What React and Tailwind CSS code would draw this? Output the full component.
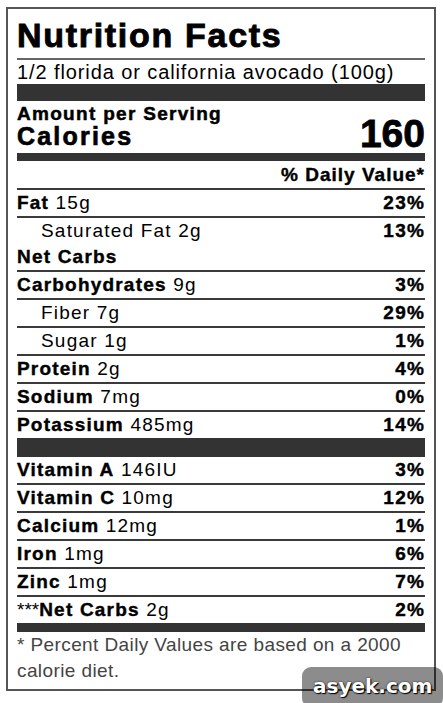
import React from 'react';
import clsx from 'clsx';

const Row = ({ label, amount, dv, indent, border = true, pre }) => (
  <div
    className={clsx(
      'flex justify-between leading-[26px] text-[19px] tracking-[1.2px]',
      border ? 'h-[28px] border-t-2 border-[#3a3a3a]' : 'h-[26px]'
    )}
  >
    <div className={clsx('whitespace-nowrap', indent && 'pl-[24px]')}>
      {pre && <span className="font-normal tracking-normal">{pre}</span>}
      <span className={indent ? 'font-normal' : 'font-bold [-webkit-text-stroke:0.4px_black]'}>{label}</span>
      {amount && <span className="font-normal"> {amount}</span>}
    </div>
    {dv && <div className="font-bold [-webkit-text-stroke:0.4px_black]">{dv}</div>}
  </div>
);

const App = () => {
  return (
    <div className="relative w-[443px] h-[703px] overflow-hidden bg-white text-black font-['Liberation_Sans',Arial,sans-serif]">
      <div className="ml-[6px] mt-[7px] w-[430px] h-[684px] border-2 border-[#555] px-[9px]">
        <div className="h-[51px] pt-[6px] border-b-2 border-[#666]">
          <h1 className="text-[34px] leading-[40px] font-bold tracking-[1.7px] whitespace-nowrap [-webkit-text-stroke:0.9px_black]">
            Nutrition Facts
          </h1>
        </div>
        <div className="h-[24px] leading-[24px] text-[20px] tracking-[0.9px] whitespace-nowrap">
          1/2 florida or california avocado (100g)
        </div>
        <div className="h-[17px] bg-[#333]" />
        <div className="flex justify-between items-end h-[52px]">
          <div className="pt-[3px] pb-[4px]">
            <div className="text-[19px] leading-[20px] font-bold tracking-[1.3px] whitespace-nowrap [-webkit-text-stroke:0.5px_black]">
              Amount per Serving
            </div>
            <div className="text-[25px] leading-[25px] font-bold tracking-[2.2px] [-webkit-text-stroke:0.7px_black]">Calories</div>
          </div>
          <div className="text-[39px] leading-[39px] font-bold [-webkit-text-stroke:0.8px_black]">160</div>
        </div>
        <div className="h-[8px] bg-[#333]" />
        <div className="h-[27px] leading-[27px] text-right text-[19px] font-bold tracking-[1px] [-webkit-text-stroke:0.4px_black]">
          % Daily Value*
        </div>
        <Row label="Fat" amount="15g" dv="23%" />
        <Row label="Saturated Fat" amount="2g" dv="13%" indent />
        <Row label="Net Carbs" border={false} />
        <Row label="Carbohydrates" amount="9g" dv="3%" />
        <Row label="Fiber" amount="7g" dv="29%" indent />
        <Row label="Sugar" amount="1g" dv="1%" indent />
        <Row label="Protein" amount="2g" dv="4%" />
        <Row label="Sodium" amount="7mg" dv="0%" />
        <Row label="Potassium" amount="485mg" dv="14%" />
        <div className="h-[19px] bg-[#333]" />
        <Row label="Vitamin A" amount="146IU" dv="3%" border={false} />
        <Row label="Vitamin C" amount="10mg" dv="12%" />
        <Row label="Calcium" amount="12mg" dv="1%" />
        <Row label="Iron" amount="1mg" dv="6%" />
        <Row label="Zinc" amount="1mg" dv="7%" />
        <Row pre="***" label="Net Carbs" amount="2g" dv="2%" />
        <div className="h-[9px] bg-[#333]" />
        <p className="w-fit text-[19px] leading-[26px] tracking-[0.4px] text-[#444]">
          * Percent Daily Values are based on a 2000
          <br />
          calorie diet.
        </p>
      </div>
      <div className="absolute left-[302px] top-[667px] w-[141px] h-[40px] rounded-[9px] bg-black/45 pl-[11px] pt-[4px]">
        <span className="font-['DejaVu_Sans',sans-serif] font-bold text-[20px] text-white [text-shadow:1px_1px_1px_#000,0_0_2px_#222]">
          asyek.com
        </span>
      </div>
    </div>
  );
};

export default App;
